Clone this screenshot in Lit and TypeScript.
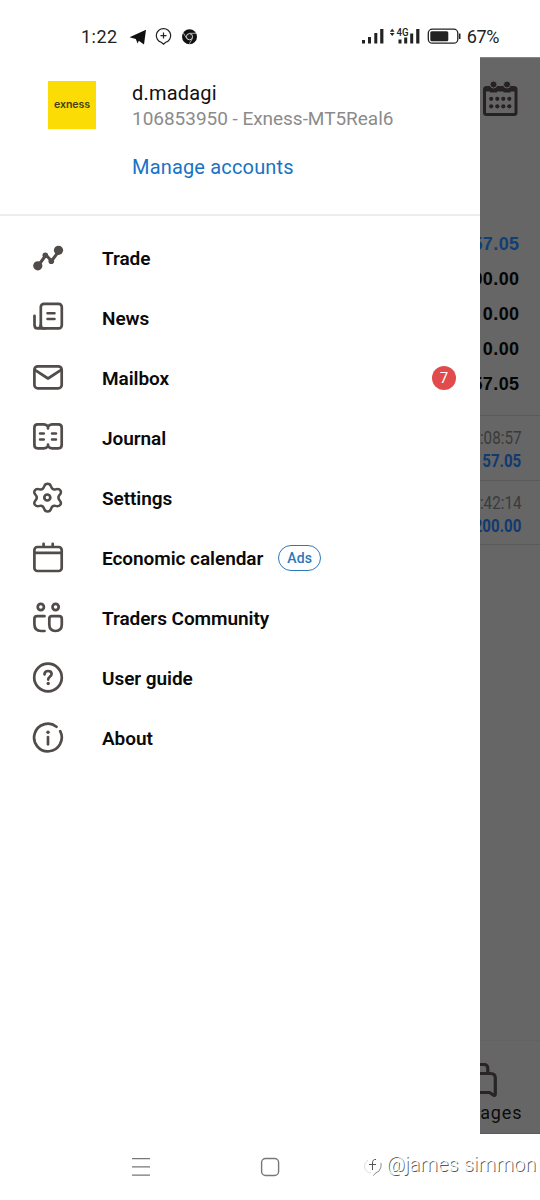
import { LitElement, html, css, svg } from "lit";
import { customElement } from "lit/decorators.js";

const ICONS: Record<string, unknown> = {
  trade: svg`<path d="M6 24 L14 13 L19.5 19 L27 9" stroke-width="3" /><circle class="fill" cx="5.8" cy="23.8" r="4.6" /><circle class="fill" cx="26.5" cy="8.3" r="4.6" /><circle class="fill" cx="13.3" cy="13.2" r="2.8"/><circle class="fill" cx="19.3" cy="19.2" r="2.8"/>`,
  news: svg`<rect x="8.8" y="1.8" width="21" height="24.6" rx="3.2" /><path d="M2.5 13.8 V22.9 Q2.5 26.4 5.7 26.4 Q8.8 26.4 8.8 22.9 M5.700 26.400 H13" /><path d="M15.500 11.300 H22.500 M15.500 17 H22.500" stroke-width="2.5"/>`,
  mail: svg`<rect x="2.4" y="4.3" width="27.3" height="22" rx="3.4" /><path d="M3.2 8.2 L16 16.5 L28.8 8.2" />`,
  journal: svg`<path d="M16 4.500 Q14.5 2.400 12 2.400 H5.7 Q2.4 2.400 2.4 5.700 V23.100 Q2.4 26.300 5.7 26.300 H12 Q14.5 26.300 16 24.300 Q17.5 26.300 20 26.300 H26.3 Q29.7 26.300 29.7 23.100 V5.700 Q29.7 2.400 26.3 2.400 H20 Q17.5 2.400 16 4.500 Z M16 4.500 V6.500 M16 22.500 V24.500" /><path d="M8 11.500 H11.800 M8 17.500 H11.800 M20 11.500 H24 M20 17.500 H24" stroke-width="2.5"/>`,
  settings: svg`<path d="M12.2 4.4 Q13 1.8 15.6 1.8 Q18.2 1.8 19 4.4 Q20.2 8 23.4 7.4 Q27.2 6.4 28.5 8.7 Q29.6 10.8 27.8 12.6 Q25 15.6 27.8 18.6 Q29.6 20.6 28.5 22.5 Q27.2 24.9 23.4 23.9 Q20.2 23.2 19 26.8 Q18.2 29.5 15.6 29.5 Q13 29.5 12.2 26.8 Q11 23.2 7.8 23.9 Q4 24.9 2.7 22.5 Q1.6 20.6 3.4 18.6 Q6.2 15.6 3.4 12.6 Q1.6 10.8 2.7 8.7 Q4 6.4 7.8 7.4 Q11 8 12.2 4.4 Z" stroke-width="2.500" /><circle cx="15.3" cy="15.5" r="3" />`,
  calendar: svg`<rect x="2.4" y="5" width="27.3" height="24" rx="3" /><path d="M3 10.8 H29 M11.6 1.8 V4 M20.7 1.8 V4" />`,
  community: svg`<circle cx="8.8" cy="5" r="3.1" /><circle cx="23.6" cy="5" r="3.1" /><path d="M12.5 14.2 H5.2 Q2.4 14.2 2.4 17 V22 Q2.4 29 9 29 H12.5" /><path d="M20 14.2 H27 Q29.8 14.2 29.8 17 V22.5 Q29.8 29 23.5 29 Q17.3 29 17.3 22.5 V17 Q17.3 14.2 20 14.2 Z" />`,
  guide: svg`<circle cx="16" cy="15.5" r="13.8" /><path d="M12.5 12.300 Q12.7 9 16 9 Q19.6 9 19.6 12 Q19.6 13.6 17.7 14.8 Q16.2 15.8 16.2 17.6" /><circle class="fill" cx="16.2" cy="21.500" r="1.7" />`,
  about: svg`<path d="M24.5 4.7 A13.8 13.8 0 1 0 28.2 9.2" /><path d="M16 15 V22.3" /><circle class="fill" cx="16" cy="10.3" r="1.7" />`,
};

interface Entry { icon: string; label: string; count?: number; tag?: string }

const MENU: Entry[] = [
  { icon: "trade", label: "Trade" },
  { icon: "news", label: "News" },
  { icon: "mail", label: "Mailbox", count: 7 },
  { icon: "journal", label: "Journal" },
  { icon: "settings", label: "Settings" },
  { icon: "calendar", label: "Economic calendar", tag: "Ads" },
  { icon: "community", label: "Traders Community" },
  { icon: "guide", label: "User guide" },
  { icon: "about", label: "About" },
];

@customElement("status-bar")
class StatusBar extends LitElement {
  static styles = css`
    :host { display: flex; align-items: center; height: 57px; box-sizing: border-box; padding: 17px 41px 0 81px; font: 18px/24px Roboto, sans-serif; color: #222; }
    .time { width: 48px; letter-spacing: 0.5px; white-space: nowrap; }
    .signals { margin-left: auto; }
    .battery { width: 37px; text-align: right; letter-spacing: -0.4px; white-space: nowrap; }
    svg { display: block; }
  `;
  render() {
    return html`
      <span class="time">1:22</span>
      <svg class="apps" width="70" height="24" viewBox="129 25 70 24">
        <path d="M129.5 37.3 L146 29.8 L144 44.5 L138.8 40.8 L137.6 43.6 L135.8 39 Z" fill="#111" />
        <path d="M163.5 28.6 a7 7 0 0 1 2.2 13.7 l-2.2 2 l-2.2 -2 a7 7 0 0 1 2.2 -13.7 Z M163.5 32.6 v6 M160.5 35.6 h6" fill="none" stroke="#222" stroke-width="1.2" />
        <circle cx="189.5" cy="36.7" r="7.5" fill="#111" />
        <circle cx="189.5" cy="36.7" r="3.1" fill="#222" stroke="#ddd" stroke-width="1" />
        <path d="M189.5 33.3 H196 M186.6 38.4 L183.4 33 M192.4 38.4 L189.4 43.8" stroke="#bbb" stroke-width=".9" />
      </svg>
      <svg class="signals" width="101" height="24" viewBox="361 25 101 24">
        <path d="M362 40h3v3.5h-3z M368 37h3v6.5h-3z M374.3 33h3v10.5h-3z M380.2 29h3.2v14.500h-3.200z M398.500 39.500h3v4h-3z M404.200 37.500h3v6h-3z M410.200 33.500h3v10h-3z M416.200 29h3.200v14.500h-3.200z" fill="#222" />
        <path d="M389.800 31.700l2.400-3 2.400 3z M389.800 33l2.400 3 2.400-3z" fill="#222" />
        <text x="396.500" y="36" font-size="11.500" font-weight="500" fill="#222" textLength="12" lengthAdjust="spacingAndGlyphs">4G</text>
        <rect x="428.300" y="29.200" width="29.500" height="14" rx="4" fill="none" stroke="#222" stroke-width="1.300" />
        <rect x="430.300" y="31.200" width="18" height="10" rx="1.500" fill="#222" />
        <path d="M459.700 33.500v5.500" stroke="#222" stroke-width="1.600" />
      </svg>
      <span class="battery">67%</span>`;
  }
}

@customElement("side-drawer")
class SideDrawer extends LitElement {
  static styles = css`
    :host { display: block; width: 480px; flex: none; background: #fff; font-family: Roboto, sans-serif; }
    .account { display: flex; gap: 36px; height: 159px; box-sizing: border-box; padding: 24px 0 0 48px; border-bottom: 2px solid #ececec; }
    .logo { width: 48px; height: 48px; background: #fbdc05; color: #45400f; font: 600 10.6px/47px Inter, sans-serif; letter-spacing: -0.1px; text-align: center; white-space: nowrap; }
    .name { font-size: 20px; line-height: 25px; color: #111; letter-spacing: 0.2px; }
    .server { font-size: 19px; line-height: 26px; color: #8b8b8b; letter-spacing: -0.03px; }
    .manage { font-size: 20px; line-height: 24px; color: #1873c4; letter-spacing: 0.17px; margin-top: 23px; }
    .menu { padding-top: 12px; }
    .item { display: flex; align-items: center; height: 60px; padding: 0 24px 0 32px; }
    .icon { width: 32px; height: 32px; margin-right: 38px; fill: none; stroke: #514b49; stroke-width: 2.7; stroke-linecap: round; stroke-linejoin: round; }
    .fill { fill: #514b49; stroke: none; }
    .label { font-size: 19px; font-weight: 600; color: #0a0a0a; white-space: nowrap; letter-spacing: -0.06px; }
    .tag { box-sizing: border-box; margin: -1px 0 0 15px; width: 43px; height: 26px; line-height: 24.5px; border: 1.3px solid #2c78bd; border-radius: 13px; color: #2c78bd; font-size: 14px; font-weight: 500; letter-spacing: 0.2px; text-align: center; }
    .count { margin-left: auto; width: 24px; height: 24px; line-height: 25px; border-radius: 50%; background: #e24b4b; color: #fff; font-size: 15px; text-align: center; }
  `;
  render() {
    return html`
      <div class="account">
        <div class="logo">exness</div>
        <div>
          <div class="name">d.madagi</div>
          <div class="server">106853950 - Exness-MT5Real6</div>
          <div class="manage">Manage accounts</div>
        </div>
      </div>
      <div class="menu">
        ${MENU.map((m) => html`
          <div class="item">
            <svg class="icon" viewBox="0 0 32 32">${ICONS[m.icon]}</svg>
            <span class="label">${m.label}</span>
            ${m.tag ? html`<span class="tag">${m.tag}</span>` : ""}
            ${m.count ? html`<span class="count">${m.count}</span>` : ""}
          </div>`)}
      </div>`;
  }
}

@customElement("history-page")
class HistoryPage extends LitElement {
  static styles = css`
    :host { display: flex; flex-direction: column; align-items: stretch; width: 60px; overflow: hidden; background: #666; font-family: Roboto, sans-serif; box-sizing: border-box; border-top: 1px solid #858585; }
    .top { display: block; height: 168px; flex: none; }
    .totals { height: 188px; padding-top: 1px; border-bottom: 1px solid #5b5b5b; }
    .total { display: flex; justify-content: flex-end; padding-right: 20.5px; font: bold 18px/35px "Liberation Sans", sans-serif; letter-spacing: 0.4px; color: #050505; }
    .blue { color: #123f73; }
    .deal { display: flex; flex-direction: column; align-items: flex-end; height: 64.5px; box-sizing: border-box; padding: 11px 19px 0 0; border-bottom: 1px solid #5b5b5b; white-space: nowrap; }
    .time { font-size: 17.5px; line-height: 23px; color: #3a3a3a; transform: scaleX(0.87); transform-origin: right; }
    .sum { font-size: 17.5px; line-height: 23px; font-weight: 700; color: #103a70; transform: scaleX(0.86); transform-origin: right; }
    .tab { margin-top: auto; height: 94px; box-sizing: border-box; border-top: 1px solid #626262; border-bottom: 1px solid #5a5a5a; }
    .tab svg { display: block; margin-top: 18px; }
    .caption { display: flex; justify-content: flex-end; padding-right: 17.5px; font-size: 18px; line-height: 24px; letter-spacing: 0.9px; color: #0c0c0c; }
  `;
  render() {
    return html`
      <svg class="top" width="60" height="168" viewBox="480 58 60 168">
        <rect x="484.500" y="87.500" width="31.500" height="27" rx="2" fill="none" stroke="#262223" stroke-width="3" />
        <path d="M484 87h33v4.500h-33z M490 85.500h7v7h-7z M503.500 85.500h7v7h-7z" fill="#262223" />
        <g fill="#262223" stroke="#666" stroke-width="1"><circle cx="493.500" cy="84.500" r="3.500" /><circle cx="507" cy="84.500" r="3.500" /></g>
        <g fill="#262223">${[491.2, 497.3, 503.3, 509.3].map((x) => svg`<circle cx=${x} cy="98.800" r="2.100" /><circle cx=${x} cy="106.300" r="2.100" />`)}</g>
      </svg>
      <div class="totals">
        ${["57.05", "200.00", "0.00", "0.00", "257.05"].map((v, i) => html`<div class="total ${i ? "" : "blue"}">${v}</div>`)}
      </div>
      <div class="deal"><span class="time">14:08:57</span><span class="sum">57.05</span></div>
      <div class="deal"><span class="time">13:42:14</span><span class="sum">200.00</span></div>
      <div class="tab">
        <svg width="60" height="42" viewBox="480 1059 60 42" fill="none" stroke="#292425" stroke-width="3.200" stroke-linejoin="round">
          <path d="M478 1064.500 H484 Q487.800 1064.500 487.800 1068.500 V1073.500 M478 1073.500 H490.500 Q495.300 1073.500 495.300 1078 V1094 Q495.300 1096 493.300 1095 L489.500 1092.500 H478" />
        </svg>
        <div class="caption">Messages</div>
      </div>`;
  }
}

@customElement("nav-bar")
class NavBar extends LitElement {
  static styles = css`
    :host { display: flex; height: 66px; align-items: center; box-sizing: border-box; padding: 0 4px 0 131px; background: #fff; }
    .keys { width: 150px; height: 22px; flex: none; }
    .credit { display: flex; align-items: center; gap: 3px; margin: -6px 0 0 auto; font: 300 20px/26px Roboto, sans-serif; color: #fff; text-shadow: 1px 0.6px 0.5px #555; white-space: nowrap; letter-spacing: 0.05px; }
    .mark { width: 20px; height: 22px; margin-top: 4px; }
  `;
  render() {
    return html`
      <svg class="keys" viewBox="131 1156 150 22" fill="none" stroke="#777">
        <path d="M132 1158.700h18 M132 1166.900h18 M132 1175.100h18" stroke-width="1.300" />
        <rect x="261.600" y="1158.500" width="17" height="17" rx="4" stroke-width="1.400" />
      </svg>
      <div class="credit">
        <svg class="mark" viewBox="0 0 20 22" fill="none" stroke="#8a8a8a" stroke-width="1">
          <path d="M5 5 Q1 8 1.500 12 Q2.500 17.500 8 18" stroke="#ddd" /><path d="M18 8 V12 Q17 17 12 18.500 L10.500 20.500" />
          <path d="M13 4.500 Q9.500 4 9.500 8 V15 M6 9.500 H13" stroke="#555" />
        </svg>
        <span>@james simmon</span>
      </div>`;
  }
}

@customElement("app-root")
class AppRoot extends LitElement {
  static styles = css`
    :host { display: flex; flex-direction: column; width: 540px; height: 1200px; background: #fff; overflow: hidden; }
    .body { display: flex; height: 1077px; flex: none; }
  `;
  render() {
    return html`
      <status-bar></status-bar>
      <div class="body"><side-drawer></side-drawer><history-page></history-page></div>
      <nav-bar></nav-bar>`;
  }
}
